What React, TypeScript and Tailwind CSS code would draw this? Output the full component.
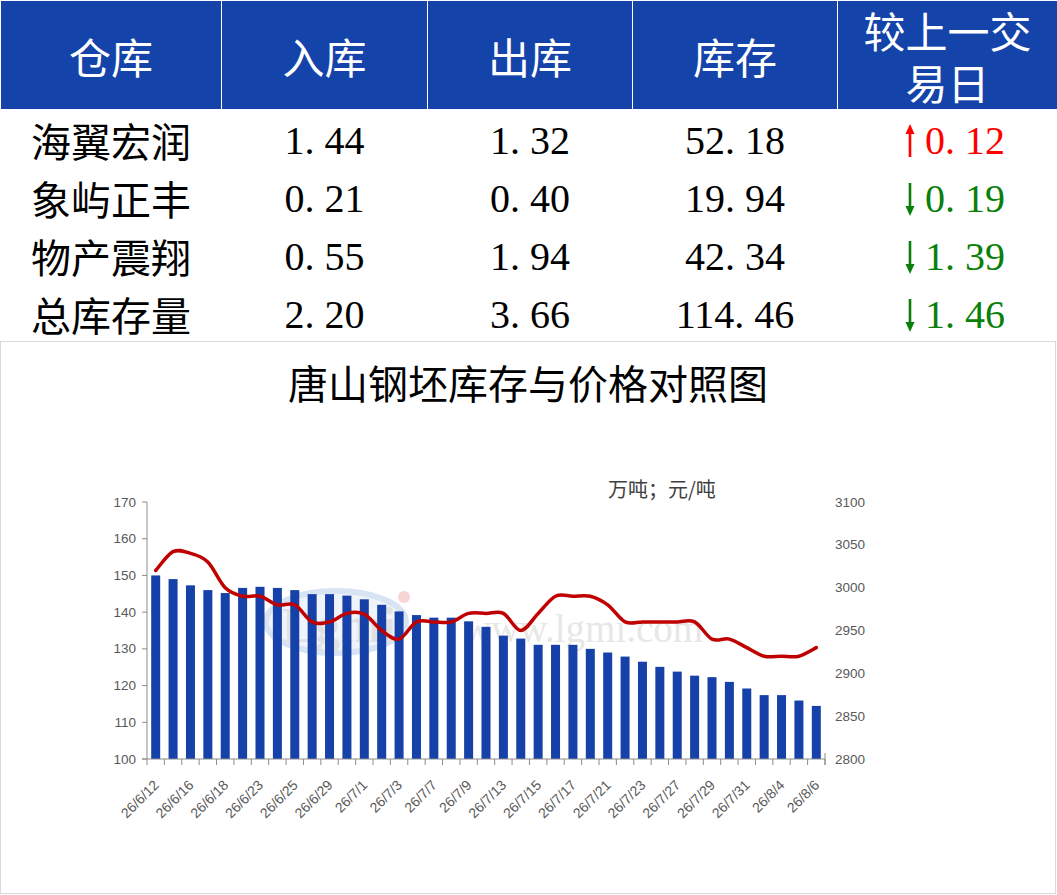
import React from "react";

const CJK = '"Noto Sans CJK SC", "Noto Sans", sans-serif';
const SERIF = '"Liberation Serif", "Noto Sans CJK SC", serif';
const AXIS = '"Liberation Sans", Arial, sans-serif';

const cols = "grid grid-cols-[220px_205px_204px_204px_219px] gap-x-[1px]";

const rows = [
  { name: "海翼宏润", inb: "1.44", out: "1.32", stock: "52.18", diff: "0.12", up: true },
  { name: "象屿正丰", inb: "0.21", out: "0.40", stock: "19.94", diff: "0.19", up: false },
  { name: "物产震翔", inb: "0.55", out: "1.94", stock: "42.34", diff: "1.39", up: false },
  { name: "总库存量", inb: "2.20", out: "3.66", stock: "114.46", diff: "1.46", up: false },
];

// inventory (万吨) and price (元/吨), one per trading day
const stock = [
  150.0, 149.0, 147.3, 146.0, 145.2, 146.6, 146.9, 146.6, 146.0, 144.9, 144.9, 144.5, 143.5,
  142.0, 140.2, 139.2, 138.5, 138.5, 137.5, 136.0, 133.6, 132.8, 131.1, 131.1, 131.1, 130.0,
  129.0, 127.9, 126.5, 125.1, 123.8, 122.7, 122.3, 121.0, 119.2, 117.4, 117.4, 115.92, 114.46,
];
const price = [
  3020, 3042, 3040, 3030, 3000, 2990, 2990, 2980, 2980, 2960, 2960, 2970, 2969, 2950, 2940,
  2960, 2960, 2960, 2970, 2970, 2970, 2950, 2970, 2990, 2990, 2990, 2980, 2960, 2960, 2960,
  2960, 2960, 2940, 2940, 2930, 2920, 2920, 2920, 2930,
];
const dates = [
  "26/6/12", "26/6/16", "26/6/18", "26/6/23", "26/6/25", "26/6/29", "26/7/1", "26/7/3",
  "26/7/7", "26/7/9", "26/7/13", "26/7/15", "26/7/17", "26/7/21", "26/7/23", "26/7/27",
  "26/7/29", "26/7/31", "26/8/4", "26/8/6",
];

const X0 = 147;
const X1 = 825;
const YB = 759;
const YT = 502;
const STEP = (X1 - X0) / stock.length;
const cx = (i: number) => X0 + (i + 0.5) * STEP;
const yL = (v: number) => YB - ((v - 100) * (YB - YT)) / 70;
const yR = (p: number) => YB - ((p - 2800) * (YB - YT)) / 300;

function smoothPath(pts: [number, number][]) {
  let d = `M${pts[0][0].toFixed(1)},${pts[0][1].toFixed(1)}`;
  for (let i = 0; i < pts.length - 1; i++) {
    const p0 = pts[i - 1] || pts[i];
    const p1 = pts[i];
    const p2 = pts[i + 1];
    const p3 = pts[i + 2] || p2;
    const c1x = p1[0] + (p2[0] - p0[0]) / 6;
    const c1y = p1[1] + (p2[1] - p0[1]) / 6;
    const c2x = p2[0] - (p3[0] - p1[0]) / 6;
    const c2y = p2[1] - (p3[1] - p1[1]) / 6;
    d += ` C${c1x.toFixed(1)},${c1y.toFixed(1)} ${c2x.toFixed(1)},${c2y.toFixed(1)} ${p2[0].toFixed(1)},${p2[1].toFixed(1)}`;
  }
  return d;
}

function Num({ v }: { v: string }) {
  const [a, b] = v.split(".");
  return (
    <span style={{ fontFamily: SERIF }}>
      {a}
      <span className="inline-block w-[0.5em]">.</span>
      {b}
    </span>
  );
}

function Arrow({ up }: { up: boolean }) {
  const c = up ? "#ff0000" : "#0a7f0a";
  return (
    <svg width="12" height="34" viewBox="0 0 12 34" className={up ? "" : "rotate-180"}>
      <line x1="6" y1="33" x2="6" y2="6" stroke={c} strokeWidth="2.6" />
      <polygon points="6,0 1.5,10 10.5,10" fill={c} />
    </svg>
  );
}

function Chart() {
  const linePts = price.map((p, i) => [cx(i), yR(p)] as [number, number]);
  return (
    <svg width="1054" height="461" viewBox="1 432 1054 461" className="block">
      {/* watermark */}
      <g opacity="0.55">
        <ellipse cx="336" cy="622" rx="70" ry="31" fill="#e3ecf7" stroke="#b9cfea" strokeWidth="6" />
        <text x="282" y="642" fontSize="50" fontWeight="700" fill="#c9c9c9" fontFamily={SERIF}>
          Lgmi
        </text>
        <circle cx="404" cy="597" r="6" fill="#f4b3b3" />
        <text x="463" y="642" fontSize="39" fill="#d4d4d4" fontFamily={SERIF}>
          www.lgmi.com
        </text>
      </g>

      {/* bars */}
      {stock.map((v, i) => (
        <rect key={i} x={cx(i) - 4.5} y={yL(v)} width="9" height={YB - yL(v)} fill="#1541a8" />
      ))}

      {/* left axis */}
      <line x1={X0} y1={YT} x2={X0} y2={YB} stroke="#8c8c8c" strokeWidth="1" />
      {[100, 110, 120, 130, 140, 150, 160, 170].map((v) => (
        <g key={v}>
          <line x1={X0 - 5} y1={yL(v)} x2={X0} y2={yL(v)} stroke="#8c8c8c" />
          <text
            x={X0 - 11}
            y={yL(v) + 4.5}
            textAnchor="end"
            fontSize="13.5"
            fill="#595959"
            fontFamily={AXIS}
          >
            {v}
          </text>
        </g>
      ))}

      {/* right axis labels */}
      {[2800, 2850, 2900, 2950, 3000, 3050, 3100].map((p) => (
        <text key={p} x={835} y={yR(p) + 4.5} fontSize="13.5" fill="#595959" fontFamily={AXIS}>
          {p}
        </text>
      ))}

      {/* bottom axis */}
      <line x1={X0 - 5} y1={YB} x2={X1} y2={YB} stroke="#8c8c8c" />
      {Array.from({ length: stock.length + 1 }).map((_, k) => (
        <line
          key={k}
          x1={X0 + k * STEP}
          y1={YB}
          x2={X0 + k * STEP}
          y2={YB + 6}
          stroke="#8c8c8c"
        />
      ))}
      <line x1={X1} y1={YB - 6} x2={X1} y2={YB + 6} stroke="#8c8c8c" />

      {dates.map((d, j) => {
        const x = cx(j * 2) + 4;
        const y = 786;
        return (
          <text
            key={d}
            x={x}
            y={y}
            textAnchor="end"
            fontSize="14"
            fill="#595959"
            fontFamily={AXIS}
            transform={`rotate(-45 ${x} ${y})`}
          >
            {d}
          </text>
        );
      })}

      {/* price line */}
      <path d={smoothPath(linePts)} fill="none" stroke="#c00000" strokeWidth="3.5" strokeLinecap="round" />

      <text x="608" y="497" fontSize="20" fill="#404040" fontFamily={CJK}>
        万吨；元/吨
      </text>
    </svg>
  );
}

export default function App() {
  return (
    <div className="w-[1057px] h-[895px] bg-white overflow-hidden" style={{ fontFamily: CJK }}>
      {/* header */}
      <div className="pt-[1px] pl-[1px]">
        <div className={`${cols} h-[108px] text-white text-[42px] leading-none`}>
          <div className="bg-[#1443aa] flex items-center justify-center pt-[1px]">仓库</div>
          <div className="bg-[#1443aa] flex items-center justify-center pt-[1px]">入库</div>
          <div className="bg-[#1443aa] flex items-center justify-center pt-[1px]">出库</div>
          <div className="bg-[#1443aa] flex items-center justify-center pt-[1px]">库存</div>
          <div className="bg-[#1443aa] flex flex-col items-center justify-center gap-[10px] pt-[2px]">
            <div>较上一交</div>
            <div>易日</div>
          </div>
        </div>
      </div>

      {/* rows */}
      <div className="pl-[1px]">
        {rows.map((r) => (
          <div key={r.name} className={`${cols} h-[58px] text-[40px] leading-none text-black`}>
            <div className="flex items-center justify-center pt-[4px]">{r.name}</div>
            <div className="flex items-center justify-center pt-[5px]">
              <Num v={r.inb} />
            </div>
            <div className="flex items-center justify-center pt-[5px]">
              <Num v={r.out} />
            </div>
            <div className="flex items-center justify-center pt-[5px]">
              <Num v={r.stock} />
            </div>
            <div
              className={`flex items-center justify-center gap-[9px] pt-[5px] pl-[14px] ${
                r.up ? "text-[#ff0000]" : "text-[#0a7f0a]"
              }`}
            >
              <Arrow up={r.up} />
              <Num v={r.diff} />
            </div>
          </div>
        ))}
      </div>

      {/* chart */}
      <div className="w-[1056px] h-[553px] border border-[#d9d9d9] flex flex-col">
        <div className="h-[90px] flex items-center justify-center pb-[10px] text-[40px] leading-none text-black">
          唐山钢坯库存与价格对照图
        </div>
        <Chart />
      </div>
    </div>
  );
}
